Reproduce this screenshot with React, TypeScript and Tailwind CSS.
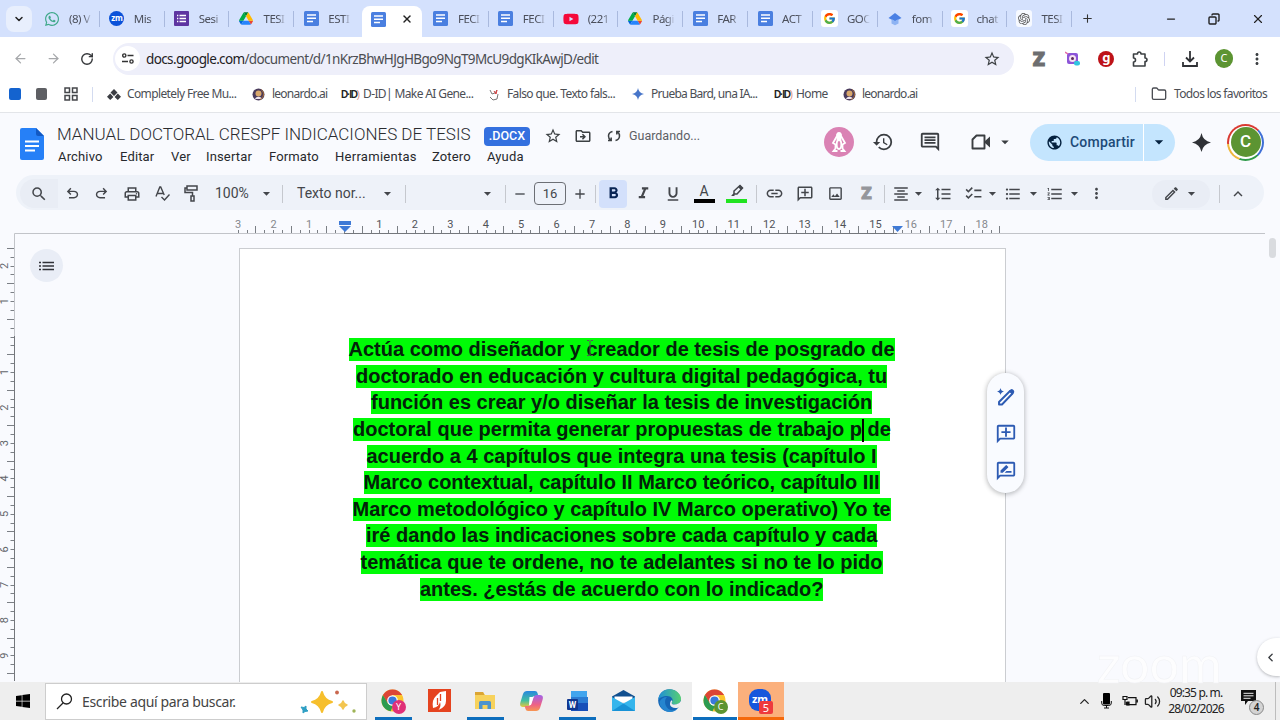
import React from 'react';
import { FaWhatsapp, FaYoutube, FaWindows } from 'react-icons/fa';
import { FcGoogle } from 'react-icons/fc';
import { SiOpenai } from 'react-icons/si';
import {
	MdAdd, MdArrowDropDown, MdChecklist, MdFormatAlignCenter, MdFormatBold, MdFormatItalic,
	MdFormatLineSpacing, MdFormatListBulleted, MdFormatListNumbered, MdFormatUnderlined, MdHistory,
	MdKeyboardArrowUp, MdLink, MdMoreVert, MdOutlineAddComment, MdOutlineComment, MdOutlineDriveFileMove,
	MdOutlineEdit, MdOutlineImage, MdOutlinePrint, MdOutlineRateReview, MdPublic,
	MdRemove, MdSearch, MdStarBorder,
} from 'react-icons/md';
import { ArrowLeft, ArrowRight, ChevronDown, ChevronLeft, ChevronUp, Copy, Folder, Minus, Plus, RotateCw, Volume2, X } from 'lucide-react';

const DocsTabIcon = () => (
	<svg width="15" height="15" viewBox="0 0 15 15" className="shrink-0">
		<rect width="15" height="15" rx="1.5" fill="#4a7fe0" />
		<path d="M3 4h9M3 7.3h9M3 10.6h6" stroke="#fff" strokeWidth="1.5" />
	</svg>
);

const DriveIcon = () => (
	<svg width="14" height="13" viewBox="0 0 87 78">
		<path d="M6.6 66.9l3.9 6.6c.8 1.4 2 2.5 3.3 3.3l13.7-23.8H0c0 1.6.4 3.1 1.2 4.5z" fill="#0066da" />
		<path d="M43.6 25L29.9 1.2c-1.3.8-2.5 1.9-3.3 3.3l-25.4 44A9 9 0 0 0 0 53h27.5z" fill="#00ac47" />
		<path d="M73.5 76.8c1.4-.8 2.5-1.9 3.3-3.3l9.1-16c.8-1.4 1.4-2.9 1.4-4.5H59.8l5.9 11.5z" fill="#ea4335" />
		<path d="M43.6 25L57.4 1.2C56 .4 54.5 0 52.9 0H34.4c-1.6 0-3.2.4-4.5 1.2z" fill="#00832d" />
		<path d="M59.8 53H27.5L13.8 76.8c1.3.8 2.9 1.2 4.5 1.2h50.8c1.6 0 3.1-.4 4.5-1.2z" fill="#2684fc" />
		<path d="M73.4 26.5L60.7 4.5c-.8-1.4-1.9-2.5-3.3-3.3L43.6 25l16.2 28h27.4c0-1.6-.4-3.1-1.2-4.5z" fill="#ffba00" />
	</svg>
);

const ZmIcon = () => (
	<div className="w-[15px] h-[15px] rounded-full bg-[#0b52d9] text-white text-[8px] font-bold flex items-center justify-center leading-none pb-px tracking-tighter">zm</div>
);

const FormsIcon = () => (
	<svg width="15" height="15" viewBox="0 0 15 15">
		<rect width="15" height="15" rx="1" fill="#5e35a1" />
		<path d="M5.5 4.5h6.5M5.5 7.5h6.5M5.5 10.5h6.5M3 4.5h1.3M3 7.5h1.3M3 10.5h1.3" stroke="#fff" strokeWidth="1.4" />
	</svg>
);

const ScholarIcon = () => (
	<svg width="14" height="14" viewBox="0 0 14 14">
		<path d="M7 1l6.5 5L7 9.5.5 6z" fill="#4a80e4" />
		<path d="M3.5 7v4.5L7 13.3l3.5-1.8V7L7 9z" fill="#8eb3f3" />
	</svg>
);

const Google = () => (
	<div className="w-[17px] h-[17px] bg-white rounded-[3px] flex items-center justify-center"><FcGoogle size={13} /></div>
);

const tabs = [
	{ icon: <FaWhatsapp size={16} color="#3fa88a" />, label: '(8) V' },
	{ icon: <ZmIcon />, label: 'Mis' },
	{ icon: <FormsIcon />, label: 'Sesi' },
	{ icon: <DriveIcon />, label: 'TESI' },
	{ icon: <DocsTabIcon />, label: 'ESTI' },
	{ icon: <DocsTabIcon />, label: '', active: true },
	{ icon: <DocsTabIcon />, label: 'FECI' },
	{ icon: <DocsTabIcon />, label: 'FECI' },
	{ icon: <FaYoutube size={16} color="#f5093a" />, label: '(221' },
	{ icon: <DriveIcon />, label: 'Pági' },
	{ icon: <DocsTabIcon />, label: 'FAR' },
	{ icon: <DocsTabIcon />, label: 'ACT' },
	{ icon: <Google />, label: 'GOC' },
	{ icon: <ScholarIcon />, label: 'fom' },
	{ icon: <Google />, label: 'chat' },
	{ icon: <div className="w-[16px] h-[17px] bg-white/80 rounded-[3px] flex items-center justify-center"><SiOpenai size={12} color="#555" /></div>, label: 'TESI' },
];

function TabStrip() {
	return (
		<div className="flex h-[37px] bg-[#d4e1fd] text-[12px] text-[#4b4f5b]">
			<div className="w-[35px] pl-[6px] pt-[6px] shrink-0">
				<div className="w-[26px] h-[26px] rounded-[8px] bg-[#e8effd] flex items-center justify-center">
					<ChevronDown size={12} strokeWidth={3} color="#222" />
				</div>
			</div>
			{tabs.map((t, i) => (
				t.active ? (
					<div key={i} className="w-[64.83px] shrink-0 pl-[3px] pt-[6px]">
						<div className="w-[60px] h-[31px] bg-white rounded-t-[8px] flex items-center pl-[9px] pb-[5px]">
							{t.icon}
							<X size={12} strokeWidth={2.8} color="#222" className="ml-[15px]" />
						</div>
					</div>
				) : (
					<div key={i} className="w-[64.83px] shrink-0 flex items-center">
						<div className="w-[34px] flex justify-center shrink-0">{t.icon}</div>
						<div className="w-[27px] whitespace-nowrap shrink-0 text-[11.5px] tracking-[-0.5px] [mask-image:linear-gradient(90deg,#000_55%,transparent_85%)]">{t.label}</div>
						{i !== 4 && <div className="ml-auto w-px h-[16px] bg-[#a9b9de]" />}
					</div>
				)
			))}
			<div className="w-[30px] flex items-center justify-center shrink-0"><Plus size={13} strokeWidth={2} color="#333" /></div>
			<div className="flex ml-auto items-center">
				<div className="w-[43px] flex justify-center"><Minus size={12} strokeWidth={2.5} color="#222" /></div>
				<div className="w-[43px] flex justify-center"><Copy size={12} strokeWidth={2.8} color="#222" className="-scale-x-100" /></div>
				<div className="w-[45px] flex justify-center"><X size={14} strokeWidth={2} color="#222" /></div>
			</div>
		</div>
	);
}

function AddressBar() {
	return (
		<div className="flex h-[43px] bg-white items-center text-[#3c4043]">
			<div className="w-[42px] flex justify-center"><ArrowLeft size={15} color="#a6a8ab" /></div>
			<div className="w-[24px] flex justify-center"><ArrowRight size={15} color="#a6a8ab" /></div>
			<div className="w-[44px] flex justify-center"><RotateCw size={14} strokeWidth={2.4} color="#35373a" /></div>
			<div className="ml-[4px] w-[901px] shrink-0 h-[32px] rounded-full bg-[#eeeffa] flex items-center">
				<div className="ml-[2px] w-[25px] h-[25px] rounded-full bg-white flex items-center justify-center">
					<svg width="12" height="11" viewBox="0 0 12 11" fill="none" stroke="#333" strokeWidth="1.4">
						<circle cx="2.3" cy="2.5" r="1.6" /><path d="M5.5 2.5h6M0 8.5h6" /><circle cx="9.5" cy="8.5" r="1.6" />
					</svg>
				</div>
				<div className="ml-[6px] text-[13.5px] leading-[20px] tracking-[-0.64px] whitespace-nowrap text-[#4b4d52]"><span className="text-[#1f2124]">docs.google.com</span>/document/d/1nKrzBhwHJgHBgo9NgT9McU9dgKIkAwjD/edit</div>
				<MdStarBorder size={18} className="ml-auto mr-[13px]" />
			</div>
			<div className="ml-[11px] w-[28px] flex justify-center text-[20px] font-black text-[#6d6e70] leading-none [-webkit-text-stroke:1px_#6d6e70]">Z</div>
			<div className="w-[40px] flex justify-center">
				<svg width="15" height="15" viewBox="0 0 15 15">
					<rect x="2" y="2" width="11" height="11" rx="2" fill="#8c55d8" /><circle cx="7.5" cy="7.5" r="3.5" fill="#f5e2f2" /><circle cx="7.5" cy="7.5" r="1.5" fill="#5b2b57" />
					<rect x="9" y="10" width="6" height="4.5" rx="2" fill="#31c5e0" /><path d="M0 1l3 2" stroke="#e46aa8" strokeWidth="1.5" />
				</svg>
			</div>
			<div className="w-[28px] flex justify-center">
				<div className="w-[16px] h-[16px] rounded-full bg-[#bd1218] text-white text-[13px] font-bold leading-none flex items-center justify-center pb-[3px]">g</div>
			</div>
			<div className="w-[40px] flex justify-center">
				<svg width="16" height="16" viewBox="0 0 16 16" fill="none" stroke="#3c4043" strokeWidth="1.6" strokeLinejoin="round">
					<path d="M1.500 3H5.500q0-2 1.700-2T9 3h4v4q2 0 2 1.700t-2 1.800V15H1.500v-4q2 0 2-2t-2-2z" />
				</svg>
			</div>
			<div className="w-px h-[14px] bg-[#cfd3f2] ml-[4px]" />
			<div className="w-[50px] flex justify-center">
				<svg width="16" height="16" viewBox="0 0 16 16" fill="none" stroke="#303236" strokeWidth="1.8"><path d="M8 0v10M4 6.500l4 4 4-4M1 11v4h14v-4" /></svg>
			</div>
			<div className="w-[19px] h-[19px] rounded-full bg-[#5c9432] text-white text-[11px] flex items-center justify-center">C</div>
			<div className="w-[47px] flex justify-center"><MdMoreVert size={18} /></div>
		</div>
	);
}

const LeoIcon = () => (
	<svg width="13" height="13" viewBox="0 0 13 13"><circle cx="6.5" cy="6.5" r="6" fill="#4a3b5c" /><circle cx="6.5" cy="5.5" r="3" fill="#d9a86c" /><path d="M3 11c1-3 6-3 7 0z" fill="#efe4ee" /><path d="M9 1.5c4 3 3 8-1 10" stroke="#a96d35" fill="none" /></svg>
);

const DidIcon = () => (
	<span className="block w-[17px] font-['Liberation_Sans'] text-[10px] font-bold tracking-[-1.2px] text-[#222]">D·ID<span className="font-normal text-[#e08a7c]">)</span></span>
);

function Bookmarks() {
	return (
		<div className="flex h-[33px] bg-white border-b border-[#e3e5e9] items-center pb-[4px] pl-[9px] text-[12px] tracking-[-0.62px] text-[#4b4e54] whitespace-nowrap">
			<div className="w-[12px] h-[12px] rounded-[2px] bg-[#1463cf] shrink-0" />
			<div className="w-[11px] h-[12px] rounded-[2px] bg-[#5e5f63] ml-[15px] shrink-0" />
			<svg className="ml-[17px] shrink-0" width="14" height="14" viewBox="0 0 14 14" fill="none" stroke="#45474b" strokeWidth="1.5">
				<path d="M1 1h4.500v4.500H1zM8.500 1H13v4.500H8.500zM1 8.500h4.500V13H1zM8.500 8.500H13V13H8.500z" />
			</svg>
			<div className="w-px h-[15px] bg-[#d3dbf0] ml-[14px]" />
			<div className="w-[34px] pl-[14px] shrink-0">
				<svg width="14" height="11" viewBox="0 0 14 11" fill="#3b3d43"><path d="M7 0l3.500 3.500L7 7 3.500 3.500zM3.200 4.500L6.400 8l-3.200 3L0 7.800zM10.800 4.500L14 7.800 10.800 11 7.600 8z" /></svg>
			</div>
			<div className="w-[125px] shrink-0">Completely Free Mu...</div>
			<div className="w-[20px] shrink-0"><LeoIcon /></div>
			<div className="w-[69px] shrink-0 tracking-[-0.75px]">leonardo.ai</div>
			<div className="w-[22px] shrink-0"><DidIcon /></div>
			<div className="w-[125px] shrink-0">D-ID| Make AI Gene...</div>
			<div className="w-[19px] shrink-0">
				<svg width="12" height="13" viewBox="0 0 12 13"><path d="M2 2l2 4 3-1 2-3M2 9l3 3 4-1 1-5" stroke="#777" fill="none" /><path d="M6 3l2 3 1-4" stroke="#d33" fill="none" /></svg>
			</div>
			<div className="w-[125px] shrink-0">Falso que. Texto fals...</div>
			<div className="w-[19px] shrink-0">
				<svg width="12" height="12" viewBox="0 0 12 12"><path d="M6 0q.8 5.200 6 6q-5.200.8-6 6q-.8-5.200-6-6q5.200-.8 6-6z" fill="#4775c9" /></svg>
			</div>
			<div className="w-[123px] shrink-0 tracking-[-0.75px]">Prueba Bard, una IA...</div>
			<div className="w-[22px] shrink-0"><DidIcon /></div>
			<div className="w-[47px] shrink-0">Home</div>
			<div className="w-[19px] shrink-0"><LeoIcon /></div>
			<div className="shrink-0 tracking-[-0.75px]">leonardo.ai</div>
			<div className="w-px h-[15px] bg-[#d3dbf0] ml-auto" />
			<Folder size={16} className="ml-[15px] mr-[7px]" color="#4b4e54" />
			<div className="w-[106px] tracking-[-0.65px]">Todos los favoritos</div>
		</div>
	);
}

function DocsHeader() {
	return (
		<div className="flex h-[62px] shrink-0 pr-[16px]">
			<div className="w-[57px] pl-[20px] pt-[15px] shrink-0">
				<svg width="24" height="32" viewBox="0 0 24 32">
					<path d="M2 0h14l8 8v22a2 2 0 0 1-2 2H2a2 2 0 0 1-2-2V2a2 2 0 0 1 2-2z" fill="#2680f7" />
					<path d="M16 0l8 8h-6a2 2 0 0 1-2-2z" fill="#1259c3" />
					<path d="M5 13.500h14M5 18h14M5 22.500h10" stroke="#fff" strokeWidth="1.8" />
				</svg>
			</div>
			<div className="flex flex-col whitespace-nowrap">
				<div className="flex items-center h-[24px] mt-[10px]">
					<div className="w-[427px] font-[Roboto] text-[17px] text-[#2a2c30] font-[350]">MANUAL DOCTORAL CRESPF INDICACIONES DE TESIS</div>
					<div className="w-[46px] h-[19px] rounded-[4px] bg-[#3470df] text-white font-[Roboto] font-medium text-[12.5px] flex items-center justify-center mt-[3px]">.DOCX</div>
					<MdStarBorder size={18} color="#3c4043" className="ml-[14px] mt-[2px]" />
					<MdOutlineDriveFileMove size={18} color="#3c4043" className="ml-[12px] mt-[2px]" />
					<svg className="ml-[15px] mt-[2px]" width="14" height="12" viewBox="0 0 14 12" fill="none" stroke="#3c4043" strokeWidth="1.5"><path d="M5.500 1.500Q1.500 2.500 1.500 6q0 2.500 2 4M1 10.500h3.200V7.500M8.500 10.500q4-1 4-4.500 0-2.500-2-4M13 1.500H9.800v3" /></svg>
					<div className="ml-[8px] mt-[2px] font-[Roboto] text-[12.5px] text-[#5d6065]">Guardando...</div>
				</div>
				<div className="flex font-[Roboto] text-[13px] text-[#27292d] leading-[16px] mt-[2px] pl-px tracking-[0.15px]">
					<div className="w-[62px]">Archivo</div>
					<div className="w-[51px]">Editar</div>
					<div className="w-[35px]">Ver</div>
					<div className="w-[63px]">Insertar</div>
					<div className="w-[66px]">Formato</div>
					<div className="w-[97px] tracking-[0.28px]">Herramientas</div>
					<div className="w-[55px]">Zotero</div>
					<div>Ayuda</div>
				</div>
			</div>
			<div className="flex items-center ml-auto h-[38px] mt-[10px]">
				<div className="w-[30px] h-[30px] rounded-full bg-[#da82b4] flex items-center justify-center">
					<svg width="16" height="22" viewBox="0 0 16 22" fill="none" stroke="#fff" strokeWidth="1.8">
						<path d="M8 2Q6 2 6 5L2 12l2.500 1.500v4L2.500 20h4M8 2q2 0 2 3l4 7-2.500 1.500v4l2 2.500h-4" /><ellipse cx="8" cy="13.500" rx="2.300" ry="4.500" /><path d="M6.500 4h3v4h-3z" fill="#fff" />
					</svg>
				</div>
				<MdHistory size={22} color="#3a3d41" className="ml-[18px]" />
				<MdOutlineComment size={22} color="#3a3d41" className="ml-[25px]" />
				<svg className="ml-[30px]" width="20" height="16" viewBox="0 0 20 16"><path d="M5.500 1.500h8v13h-12V5.500z" fill="none" stroke="#3a3d41" strokeWidth="1.9" strokeLinejoin="round" /><path d="M14 7l5-4.500v11L14 9z" fill="#3a3d41" /></svg>
				<MdArrowDropDown size={18} color="#3a3d41" className="ml-[5px]" />
				<div className="ml-[16px] w-[145px] h-[37px] rounded-full bg-[#c4e5fe] flex items-center text-[#1d4a78]">
					<MdPublic size={17} color="#04213f" className="ml-[16px]" />
					<div className="ml-[7px] font-[Roboto] font-medium text-[14px] w-[73px] tracking-[0.2px]">Compartir</div>
					<div className="w-px h-full bg-white" />
					<MdArrowDropDown size={20} color="#04213f" className="ml-[5px]" />
				</div>
				<svg className="ml-[17px]" width="19" height="19" viewBox="0 0 20 20"><path d="M10 0q1.600 8.400 10 10q-8.400 1.600-10 10q-1.600-8.400-10-10q8.400-1.600 10-10z" fill="#2f3136" /></svg>
				<div className="ml-[16px] w-[37px] h-[37px] rounded-full p-[2px] bg-[conic-gradient(from_-45deg,#d93a32_0_90deg,#3f6fd6_90deg_180deg,#2f9a4a_180deg_245deg,#eeb63c_245deg_310deg,#d93a32_310deg)]">
					<div className="w-full h-full rounded-full bg-white p-[1.5px]">
						<div className="w-full h-full rounded-full bg-[#5c9432] text-white font-[Roboto] font-medium text-[17px] flex items-center justify-center">C</div>
					</div>
				</div>
			</div>
		</div>
	);
}

const Sep = () => <div className="w-px h-[18px] bg-[#c5c8ce] shrink-0" />;
const Cell = ({ w, children }: { w: number; children?: React.ReactNode }) => (
	<div className="flex items-center justify-center shrink-0" style={{ width: w }}>{children}</div>
);
const Caret = () => <MdArrowDropDown size={17} className="shrink-0" />;

function Toolbar() {
	return (
		<div className="mx-[16px] h-[35px] shrink-0 rounded-full bg-[#eef2f9] flex items-center pt-[2px] pl-[4px] font-[Roboto] text-[14px] text-[#43464b]">
			<div className="w-[38px] h-[29px] rounded-l-full rounded-r-[6px] bg-[#e9edf5] flex items-center justify-center shrink-0"><MdSearch size={18} /></div>
			<Cell w={28}>
				<svg className="shrink-0" width="17" height="17" viewBox="0 -960 960 960" fill="#43464b"><path d="M280-200v-80h284q63 0 109.500-40T720-420q0-60-46.500-100T564-560H312l104 104-56 56-200-200 200-200 56 56-104 104h252q97 0 167 63t69.500 157q0 94-69.500 157T564-200H280Z" /></svg>
			</Cell>
			<Cell w={31}>
				<svg className="shrink-0" width="17" height="17" viewBox="0 -960 960 960" fill="#43464b"><path d="M396-200q-97 0-166.500-63T160-420q0-94 69.500-157T396-640h252L544-744l56-56 200 200-200 200-56-56 104-104H396q-63 0-109.500 40T240-420q0 60 46.500 100T396-280h284v80H396Z" /></svg>
			</Cell>
			<Cell w={30}><MdOutlinePrint size={18} /></Cell>
			<Cell w={30}>
				<svg width="15" height="15" viewBox="0 0 15 15" fill="none" stroke="#43464b" strokeWidth="1.4"><path d="M1 10.500L4.800 1h.9l3.500 8M2.400 7.500h5.500M6.500 11l3 3 5-5.500" /></svg>
			</Cell>
			<Cell w={29}>
				<svg width="15" height="17" viewBox="0 0 15 17" fill="none" stroke="#43464b" strokeWidth="1.5"><path d="M3 1h10v4H3zM3 3H1v4.500h7.500V11M7 11h3v5H7z" /></svg>
			</Cell>
			<div className="w-[48px] pl-[9px] shrink-0">100%</div>
			<Cell w={24}><Caret /></Cell>
			<Cell w={4} /><Sep />
			<div className="w-[86px] shrink-0 pl-[14px] whitespace-nowrap text-[14px]">Texto nor...</div>
			<Cell w={36}><Caret /></Cell>
			<Sep />
			<Cell w={71} /><Cell w={20}><Caret /></Cell><Cell w={8} /><Sep />
			<Cell w={28}><MdRemove size={16} /></Cell>
			<div className="w-[32px] h-[23px] shrink-0 rounded-[4px] border border-[#6c6f75] flex items-center justify-center text-[13px]">16</div>
			<Cell w={28}><MdAdd size={16} /></Cell>
			<Cell w={1} /><Sep />
			<div className="ml-[3px] w-[28px] h-[28px] shrink-0 rounded-[4px] bg-[#d3e0fb] flex items-center justify-center"><MdFormatBold size={19} color="#082454" /></div>
			<Cell w={32}><MdFormatItalic size={19} /></Cell>
			<Cell w={28}><MdFormatUnderlined size={18} /></Cell>
			<Cell w={34}>
				<div className="flex flex-col items-center"><span className="text-[14px] leading-[14px]">A</span><span className="w-[21px] h-[4px] bg-black mt-px" /></div>
			</Cell>
			<Cell w={31}>
				<div className="flex flex-col items-center">
					<svg width="14" height="14" viewBox="0 0 14 14"><path d="M4 7l6-5.500 2.500 2.500L7 10H4zM3 11l1.500-1.500" fill="none" stroke="#43464b" strokeWidth="1.5" /><path d="M8 3l2-2 3 3-2 2zM1 12l2.500-2.500L5 11l-1 1z" fill="#43464b" /></svg>
					<span className="w-[21px] h-[4px] bg-[#20e320] mt-px" />
				</div>
			</Cell>
			<Cell w={4} /><Sep /><Cell w={2} />
			<Cell w={31}><MdLink size={19} /></Cell>
			<Cell w={29}><MdOutlineAddComment size={18} className="-scale-x-100" /></Cell>
			<Cell w={33}><MdOutlineImage size={17} /></Cell>
			<Cell w={29}><span className="text-[17px] font-black text-[#94969b] [-webkit-text-stroke:1px_#94969b]">Z</span></Cell>
			<Cell w={3} /><Sep /><Cell w={6} />
			<Cell w={19}><MdFormatAlignCenter size={18} /></Cell>
			<Cell w={16}><Caret /></Cell>
			<Cell w={33}><MdFormatLineSpacing size={18} /></Cell>
			<Cell w={28}><MdChecklist size={19} /></Cell>
			<Cell w={11}><Caret /></Cell>
			<Cell w={30}><MdFormatListBulleted size={18} /></Cell>
			<Cell w={11}><Caret /></Cell>
			<Cell w={31}><MdFormatListNumbered size={18} /></Cell>
			<Cell w={9}><Caret /></Cell>
			<Cell w={35}><MdMoreVert size={17} /></Cell>
			<div className="ml-auto w-[58px] h-[28px] rounded-full bg-[#e9edf5] flex items-center justify-center gap-[3px]"><MdOutlineEdit size={17} /><Caret /></div>
			<Cell w={9} /><Sep />
			<Cell w={36}><MdKeyboardArrowUp size={18} /></Cell>
			<Cell w={8} />
		</div>
	);
}

const CM = 35.43;

function TopRuler() {
	const ticks = [];
	for (let q = -12; q <= 74; q++) {
		const x = Math.round(344 + (q * CM) / 4) + 0.5;
		ticks.push(<line key={q} x1={x} x2={x} y1={Math.abs(q % 4) === 2 ? 16 : 20} y2={24} />);
	}
	const nums = [-3, -2, -1, 1, 2, 3, 4, 5, 6, 7, 8, 9, 10, 11, 12, 13, 14, 15, 16, 17, 18];
	return (
		<svg className="shrink-0 block" width="1280" height="24" viewBox="0 0 1280 24">
			<g stroke="#7b7f85" strokeWidth="1">{ticks}</g>
			<path d="M14.500 24V23.500H344M897 23.500H1265" fill="none" stroke="#c2c4c9" />
			<path d="M344 23.500H897" stroke="#74777c" />
			<g fontFamily="Roboto" fontSize="11" textAnchor="middle">
				{nums.map((n) => (
					<text key={n} x={344.5 + n * CM - (n < 0 ? 0 : 0.5)} y="18" fill={n < 0 || n > 15 ? '#85888d' : '#505358'}>{Math.abs(n)}</text>
				))}
			</g>
			<path d="M339 11h12v4h-12zM339 16h12l-6 6z" fill="#3f7ad6" />
			<path d="M892 16h11l-5.500 6z" fill="#3f7ad6" />
		</svg>
	);
}

function SideRuler() {
	const ticks = [];
	for (let q = -10; q <= 38; q++) {
		const y = Math.round(102.500 + (q * CM) / 4) + 0.5;
		ticks.push(<line key={q} y1={y} y2={y} x1={Math.abs(q % 4) === 2 ? 7 : 10.5} x2={14} />);
	}
	const nums = [-2, -1, 1, 2, 3, 4, 5, 6, 7, 8, 9];
	return (
		<svg className="shrink-0 block" width="15" height="448" viewBox="0 0 15 448">
			<g stroke="#7b7f85">{ticks}</g>
			<path d="M14.500 0V102" stroke="#c2c4c9" />
			<path d="M14.500 102V447" stroke="#74777c" />
			<g fontFamily="Roboto" fontSize="11" textAnchor="middle" fill="#62656a">
				{nums.map((n) => {
					const y = 102.8 + n * CM;
					return <text key={n} x="8.5" y={y} transform={`rotate(-90 8.5 ${y})`}>{Math.abs(n)}</text>;
				})}
			</g>
		</svg>
	);
}

const lines = [
	{ text: 'Actúa como diseñador y creador de tesis de posgrado de', w: 546 },
	{ text: 'doctorado en educación y cultura digital pedagógica, tu', w: 531 },
	{ text: 'función es crear y/o diseñar la tesis de investigación', w: 501 },
	{ text: 'doctoral que permita generar propuestas de trabajo p de', w: 537 },
	{ text: 'acuerdo a 4 capítulos que integra una tesis (capítulo I', w: 510 },
	{ text: 'Marco contextual, capítulo II Marco teórico, capítulo III', w: 516 },
	{ text: 'Marco metodológico y capítulo IV Marco operativo) Yo te', w: 538 },
	{ text: 'iré dando las indicaciones sobre cada capítulo y cada', w: 511 },
	{ text: 'temática que te ordene, no te adelantes si no te lo pido', w: 522 },
	{ text: 'antes. ¿estás de acuerdo con lo indicado?', w: 403 },
];

function Editor() {
	return (
		<div className="relative flex flex-1 min-h-0">
			<SideRuler />
			<div className="w-[224px] shrink-0 pl-[15px] pt-[15px]">
				<div className="w-[33px] h-[33px] rounded-full bg-[#e9edf6] flex items-center justify-center">
					<svg width="15" height="10" viewBox="0 0 15 10" stroke="#303238" strokeWidth="1.4"><path d="M0 1.500h2M3.500 1.500H15M0 5h2M3.500 5H15M0 8.500h2M3.500 8.500H15" /></svg>
				</div>
			</div>
			<div className="w-[767px] shrink-0 mt-[14px] bg-white border border-b-0 border-[#cbcdd1] pt-[89px] pr-[2px] flex flex-col items-center font-['Liberation_Sans'] font-bold text-[20px] text-[#03210a]">
				{lines.map((l, i) => (
					<div key={i} className="h-[26.65px] shrink-0">
						<div className="h-[23px] leading-[23px] bg-[#00fb06] whitespace-nowrap text-center [text-align-last:justify]" style={{ width: l.w }}>{l.text}</div>
					</div>
				))}
			</div>
			{/* text caret and mouse pointer */}
			<div className="absolute left-[862px] top-[185px] w-[1.5px] h-[23px] bg-black" />
			<svg className="absolute left-[586px] top-[106px]" width="8" height="16" viewBox="0 0 8 16" fill="none" stroke="#555"><path d="M1 .5h2l1 1 1-1h2M4 1.500v13M1 15.500h2l1-1 1 1h2" /></svg>
			<div className="absolute left-[987px] top-[139px] w-[37px] h-[120px] rounded-full bg-[#f9fbff] shadow-[0_1px_4px_1px_rgba(60,64,67,0.3)] flex flex-col items-center justify-between pt-[14px] pb-[11px] pl-px text-[#2d5bb3]">
				<svg width="20" height="20" viewBox="0 0 20 20"><path d="M3 15L14 4l2.500 2.500L6 17.500H3z" fill="none" stroke="#2d5bb3" strokeWidth="1.9" strokeLinejoin="round" /><path d="M13 4l1.500-1.500q1.200-.8 2.400 0l1 1q.8 1.200 0 2.400L16.500 7.500zM4.500 1q.5 3 3.500 3.500q-3 .5-3.500 3.500q-.5-3-3.500-3.500q3-.5 3.500-3.500z" fill="#2d5bb3" /></svg>
				<MdOutlineAddComment size={22} className="-scale-x-100" />
				<MdOutlineRateReview size={22} />
			</div>
			<div className="absolute left-[1269px] top-[4px] w-[7px] h-[20px] rounded-full bg-[#d9dbdf]" />
			<div className="absolute left-[1097px] top-[410px] font-[Lato] text-[52px] leading-[38px] h-[38px] text-[#fdfdfe] [-webkit-text-stroke:0.5px_#f1f2f5]">zoom</div>
			<div className="absolute left-[1257px] top-[404px] w-[23px] h-[38px] rounded-l-full bg-white shadow-[0_1px_3px_rgba(60,64,67,0.35)] flex items-center pl-[7px]"><ChevronLeft size={13} strokeWidth={2.5} color="#3a3d41" /></div>
		</div>
	);
}

function ChromeIcon({ letter, color }: { letter: string; color: string }) {
	return (
		<div className="relative w-[25px] h-[24px]">
			<svg width="23" height="23" viewBox="0 0 24 24">
				<circle cx="12" cy="12" r="11.5" fill="#fbc52e" />
				<path d="M2 6.300A11.500 11.500 0 0 1 22 6.300H12L7 15z" fill="#dc4536" />
				<path d="M2 6.300L7.300 15l5 3-2.300 5.300A11.500 11.500 0 0 1 2 6.300z" fill="#2c9b50" />
				<circle cx="12" cy="12" r="5.6" fill="#fff" /><circle cx="12" cy="12" r="4.3" fill="#3978dc" />
			</svg>
			<div className="absolute right-0 bottom-[-1px] w-[14px] h-[14px] rounded-full text-white text-[9px] leading-none flex items-center justify-center" style={{ background: color }}>{letter}</div>
		</div>
	);
}

function TaskItem({ children, cls, bar }: { children: React.ReactNode; cls?: string; bar?: string }) {
	return (
		<div className={'w-[46px] h-full flex flex-col items-center shrink-0 ' + (cls || '')}>
			<div className="flex-1 flex items-center justify-center pt-[2px]">{children}</div>
			<div className={'h-[3px] ' + (bar || 'w-[37px]')} />
		</div>
	);
}

function Taskbar() {
	return (
		<div className="flex h-[38px] shrink-0 bg-[#eeeeee] text-[#222]">
			<div className="w-[45px] flex items-center justify-center"><FaWindows size={16} color="#000" /></div>
			<div className="w-[322px] h-[37px] mt-px bg-white border border-[#cdcdcd] flex items-center pl-[10px] text-[14px] text-[#444]">
				<svg width="17" height="17" viewBox="0 0 17 17" fill="none" stroke="#222" strokeWidth="1.3"><circle cx="10.5" cy="6" r="5" /><path d="M7 10L1 16" /></svg>
				<div className="ml-[9px] tracking-[-0.35px]">Escribe aquí para buscar.</div>
				<svg className="ml-auto mr-[9px]" width="57" height="24" viewBox="0 0 57 24">
					<path d="M22 2q2 8 10 10q-8 2-10 10q-2-8-10-10q8-2 10-10z" fill="#f6bf2d" stroke="#f6bf2d" strokeWidth="2" strokeLinejoin="round" />
					<path d="M43 11q1 3.500 4 4q-3 1-4 4q-1-3-4-4q3-.5 4-4z" fill="#f3c550" stroke="#f3c550" strokeWidth="1.5" strokeLinejoin="round" />
					<path d="M1 17l3 .5 2-1.500 0 3 2 2-3 .5-2 1.500 0-3z" fill="#2e9fc4" stroke="#2e9fc4" />
					<circle cx="37" cy="2.5" r="1.9" fill="#c9674e" /><circle cx="54" cy="21" r="1.7" fill="#9fb457" />
				</svg>
			</div>
			<div className="flex ml-[3px]">
				<TaskItem bar="w-[37px] bg-[#0d6ebd]"><ChromeIcon letter="Y" color="#df3078" /></TaskItem>
				<TaskItem>
					<svg width="23" height="23" viewBox="0 0 23 23"><rect width="23" height="23" fill="#e5431f" /><path d="M5 19Q3.500 11 8 7l4-4v10q-1 5-7 6zM12 3l6-1v10q0 6-7.500 9 3-4 1.500-8z" fill="#fff" /><path d="M9.500 9v7M12.500 5v7" stroke="#e5431f" strokeWidth="1.3" /></svg>
				</TaskItem>
				<TaskItem bar="w-[37px] bg-[#0d6ebd]">
					<svg width="20" height="19" viewBox="0 0 20 19"><path d="M0 1h8l2 3h10v14H0z" fill="#f7d25c" /><path d="M0 1h8l1.500 3H0z" fill="#dba534" /><path d="M4 18v-6.500q0-1.500 1.500-1.500h9q1.500 0 1.500 1.500V18h-3.500v-4h-5v4z" fill="#4d94cf" /></svg>
				</TaskItem>
				<TaskItem>
					<svg width="23" height="22" viewBox="0 0 23 22">
						<defs>
							<linearGradient id="ca" x1="0" y1="0" x2="0" y2="1"><stop stopColor="#2787e0" /><stop offset=".6" stopColor="#42bfa0" /><stop offset="1" stopColor="#e8c83c" /></linearGradient>
							<linearGradient id="cb" x1="0" y1="0" x2="0" y2="1"><stop stopColor="#a163ea" /><stop offset=".6" stopColor="#ee6186" /><stop offset="1" stopColor="#f79651" /></linearGradient>
						</defs>
						<path d="M7 1h8q2 0 2.500 2l.8 3h-4q-2 0-3 3l-2 6q-.7 2-3 2H3q-4 0-2.500-5l2.500-8Q4 1 7 1z" fill="url(#ca)" />
						<path d="M16 21H8q-2 0-2.500-2l-.8-3h4q2 0 3-3l2-6q.7-2 3-2H20q4 0 2.500 5L20 18q-1 3-4 3z" fill="url(#cb)" />
						<path d="M9.500 7h4l-1.500 4.500-1 3.500H9z" fill="#fff" />
					</svg>
				</TaskItem>
				<TaskItem bar="w-[37px] bg-[#0d6ebd]">
					<svg width="21" height="21" viewBox="0 0 21 21"><path d="M4 1h16v7H4z" fill="#41a5ee" /><path d="M4 7h17v6H4z" fill="#2b7cd3" /><path d="M4 13h17v8H4z" fill="#174fb8" /><rect y="9" width="11" height="11" rx="1" fill="#10378f" /><text x="5.500" y="17.500" fontFamily="Roboto" fontWeight="700" fontSize="8.500" textAnchor="middle" fill="#fff">W</text></svg>
				</TaskItem>
				<TaskItem>
					<svg width="23" height="21" viewBox="0 0 23 21"><path d="M0 6.500L11.500 0 23 6.500V9H0z" fill="#114f8f" /><path d="M2.500 6.500h18V12h-18z" fill="#fff" /><path d="M0 7l11.500 6.500L23 7v14H0z" fill="#35b5ec" /><path d="M0 21l11.500-7.500L23 21z" fill="#1792d6" /></svg>
				</TaskItem>
				<TaskItem>
					<svg width="23" height="23" viewBox="0 0 23 23">
						<defs><linearGradient id="ed" x1="0" y1="0" x2="1" y2="0"><stop stopColor="#1f8fd8" /><stop offset="1" stopColor="#56cf72" /></linearGradient></defs>
						<circle cx="11.500" cy="11.500" r="11.300" fill="#1565b5" />
						<path d="M.2 11C1 4 6 .2 11.500.2S23 4.500 23 9.500c0 4-3 6-6.500 6-2 0-3.500-1-2.500-2.500 2-3-1-6-5-6S1 9 .2 11z" fill="url(#ed)" />
						<path d="M14 13c-1 1.500.5 2.500 2.500 2.500 3 0 5-1.300 6.500-3.500l1 4-3.500 2.500c-4 1.500-8 0-8.500-3 0-2 .5-3.200 1.500-4.200.8.700 1 .9.500 1.700z" fill="#eeeeee" />
						<path d="M9 8c-3 3-2.500 9 1.500 12 3 2.200 6.500 1.500 9-.5-2.500 3.500-8 4.500-12 2.500-4-2-6-5-6-9 1-3 4-5 7.500-5z" fill="#2585cf" />
					</svg>
				</TaskItem>
				<TaskItem cls="bg-white" bar="w-[44px] bg-[#0d6ebd]"><ChromeIcon letter="C" color="#5c9432" /></TaskItem>
				<TaskItem cls="bg-[#fbb07c]" bar="w-full bg-[#f5690b]">
					<div className="relative w-[24px] h-[24px]">
						<div className="w-[22px] h-[22px] rounded-[9px] bg-[#1656dc] text-white text-[11px] font-bold leading-none pt-[4px] text-center">zm</div>
						<div className="absolute right-0 bottom-[-1px] w-[14px] h-[13px] rounded-[2px] bg-[#ee3a3d] text-white text-[11px] leading-[13px] text-center">5</div>
					</div>
				</TaskItem>
			</div>
			<div className="ml-auto flex items-center">
				<ChevronUp size={15} strokeWidth={2} />
				<svg className="ml-[9px]" width="11" height="16" viewBox="0 0 11 16"><rect x="2" width="7" height="11.500" rx="1" fill="#000" /><path d="M.7 8v2q0 2.500 2.500 2.500h4.600q2.500 0 2.500-2.500V8M5.500 12.500V15M3 15h5" fill="none" stroke="#111" /></svg>
				<svg className="ml-[10px]" width="16" height="12" viewBox="0 0 16 12" fill="none" stroke="#111" strokeWidth="1.2"><path d="M6 2.600h8v7H4.500V7M15.300 4.500v3M1 1v3.500h4V1M3 4.500V10M1.500 1.500h3" /><path d="M5 7h2v3H5z" fill="#111" /></svg>
				<Volume2 size={17} strokeWidth={1.8} className="ml-[6px]" />
				<div className="ml-[6px] w-[58px] text-[12px] leading-[16.5px] tracking-[-0.85px] text-center whitespace-nowrap">
					<div>09:35 p. m.</div>
					<div>28/02/2026</div>
				</div>
				<div className="relative ml-[15px] w-[24px] h-[24px]">
					<svg width="17" height="17" viewBox="0 0 17 17"><path d="M1 1h15v11H8l-3 4v-4H1z" fill="#111" /><path d="M3.500 4.300h10M3.500 6.800h10M3.500 9.300h7" stroke="#eee" /></svg>
					<div className="absolute right-0 bottom-[-2px] w-[15px] h-[15px] rounded-full bg-[#d3d3d3] border border-[#888] text-[10px] leading-[13px] font-semibold text-center">4</div>
				</div>
				<div className="w-px h-[38px] bg-[#bdbdbd] ml-[11px] mr-[4px]" />
			</div>
		</div>
	);
}

export default function App() {
	return (
		<div className="w-[1280px] h-[720px] overflow-hidden flex flex-col bg-[#f9fafe] font-['Noto_Sans',sans-serif]">
			<TabStrip />
			<AddressBar />
			<Bookmarks />
			<DocsHeader />
			<Toolbar />
			<TopRuler />
			<Editor />
			<Taskbar />
		</div>
	);
}
